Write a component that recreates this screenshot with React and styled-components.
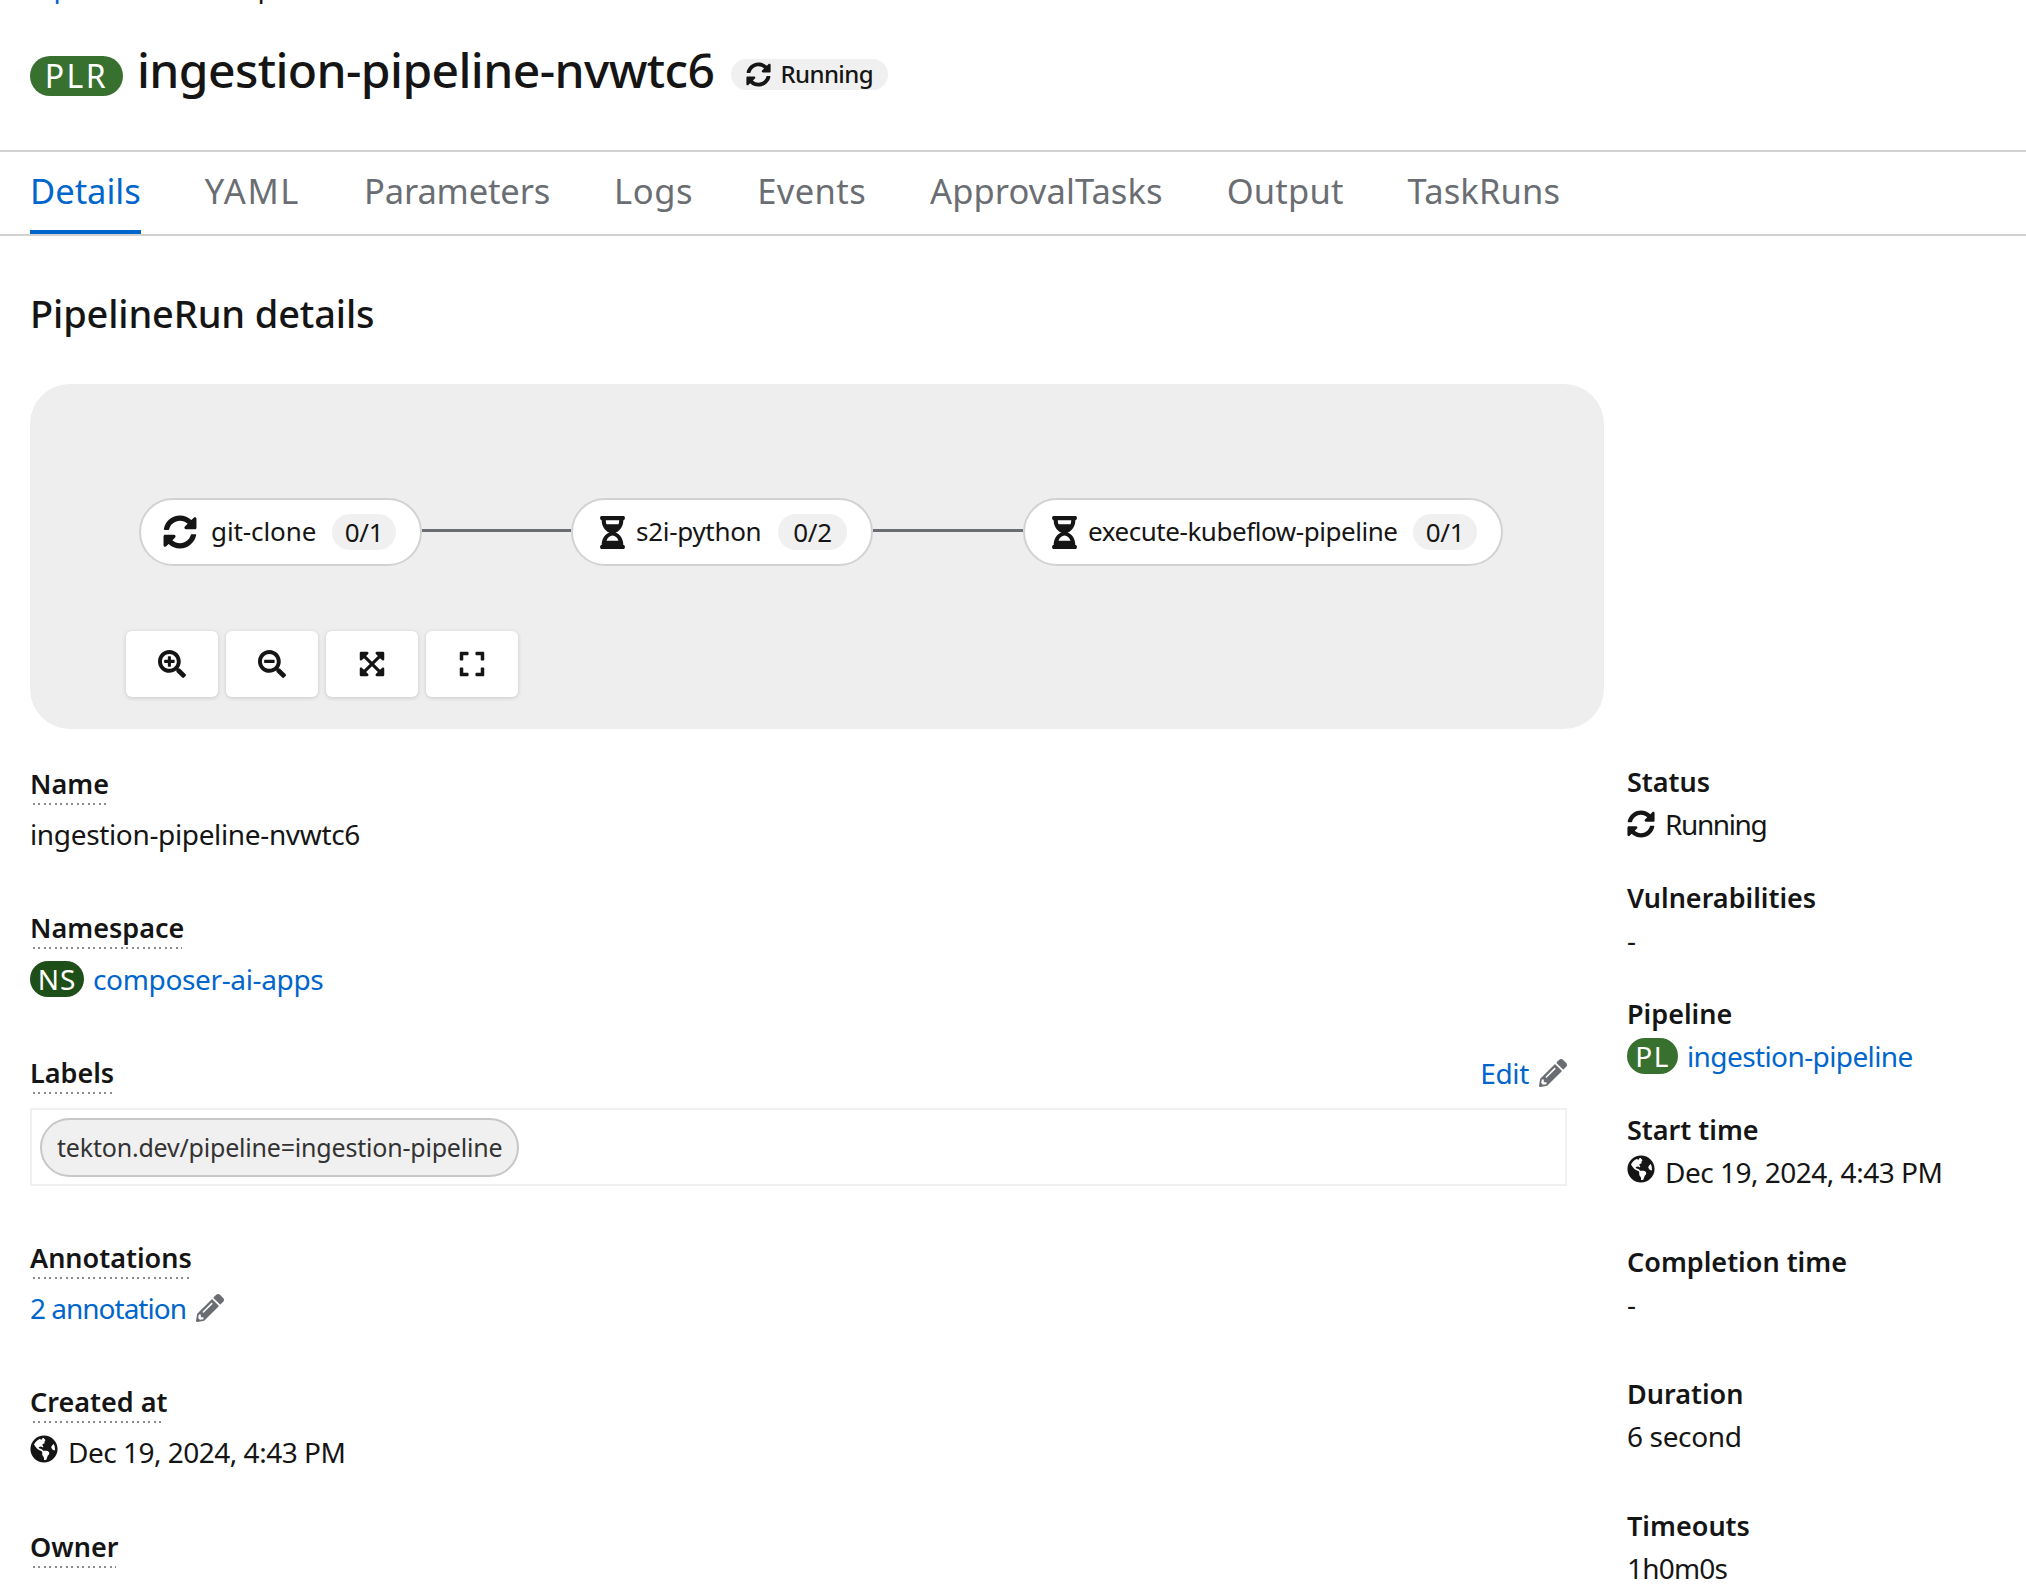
import { Fragment } from "react";
import styled, { createGlobalStyle } from "styled-components";
import {
  FaSyncAlt,
  FaHourglassHalf,
  FaSearchPlus,
  FaSearchMinus,
  FaExpandArrowsAlt,
  FaExpand,
  FaPencilAlt,
  FaGlobeAmericas,
} from "react-icons/fa";

const GlobalStyle = createGlobalStyle`
  html, body { margin: 0; padding: 0; background: #fff; }
  body {
    font-family: "Noto Sans", "Open Sans", sans-serif;
    font-size: 28px;
    line-height: 42px;
    letter-spacing: -0.35px;
    color: #151515;
  }
`;

const Page = styled.div`
  width: 2026px;
  height: 1588px;
  overflow: hidden;
`;

const Breadcrumb = styled.div`
  height: 4px;
  overflow: hidden;
  padding-left: 30px;
  display: flex;
  align-items: flex-end;
  gap: 38px;
  span {
    color: #151515;
    margin-bottom: -4px;
    white-space: nowrap;
  }
  a {
    color: #06c;
    margin-bottom: -4px;
    white-space: nowrap;
  }
`;

const TitleRow = styled.div`
  height: 146px;
  box-sizing: border-box;
  padding: 0 0 2px 30px;
  display: flex;
  align-items: center;
`;

const KindBadge = styled.span`
  display: inline-flex;
  align-items: center;
  justify-content: center;
  flex: none;
  width: ${(p) => p.$w}px;
  height: ${(p) => p.$h}px;
  border-radius: 20px;
  background: ${(p) => p.$bg};
  color: #fff;
  font-size: ${(p) => p.$size}px;
  letter-spacing: ${(p) => p.$ls}px;
  line-height: 1;
`;

const Title = styled.h1`
  margin: 0 17px 0 14px;
  font-size: 48px;
  line-height: 60px;
  font-weight: 500;
  letter-spacing: -0.6px;
  position: relative;
  top: -6px;
`;

const StatusPill = styled.span`
  display: inline-flex;
  align-items: center;
  gap: 9px;
  height: 31px;
  padding: 0 15px;
  border-radius: 16px;
  background: #f0f0f0;
  font-size: 24px;
  font-weight: 500;
  letter-spacing: -0.6px;
  position: relative;
  top: -2px;
  svg { width: 25px; height: 25px; }
`;

const Tabs = styled.div`
  height: 82px;
  padding-left: 30px;
  display: flex;
  gap: 64px;
  border-top: 2px solid #d2d2d2;
  border-bottom: 2px solid #d2d2d2;
`;

const Tab = styled.div`
  display: flex;
  align-items: center;
  font-size: 34.5px;
  letter-spacing: ${(p) => p.$ls || 0}px;
  color: ${(p) => (p.$active ? "#06c" : "#6a6e73")};
  border-bottom: 4px solid ${(p) => (p.$active ? "#06c" : "transparent")};
`;

const Content = styled.div`
  padding: 51px 0 0 30px;
`;

const Heading = styled.h2`
  margin: 0 0 45px;
  font-size: 38px;
  line-height: 52px;
  font-weight: 500;
  letter-spacing: -0.15px;
`;

const GraphPanel = styled.div`
  width: 1574px;
  height: 345px;
  box-sizing: border-box;
  padding: 114px 0 0 96px;
  border-radius: 40px;
  background: #eee;
`;

const NodeRow = styled.div`
  display: flex;
  align-items: center;
  margin-left: 13px;
`;

const Node = styled.div`
  display: flex;
  align-items: center;
  box-sizing: border-box;
  width: ${(p) => p.$w}px;
  height: 68px;
  padding: 0 24px 0 ${(p) => p.$pad}px;
  border: 2px solid #d2d2d2;
  border-radius: 34px;
  background: #fff;
  font-size: 26px;
  svg { flex: none; }
`;

const NodeName = styled.span`
  flex: 1;
  margin: -2px 0 0 ${(p) => p.$gap}px;
  letter-spacing: ${(p) => p.$ls}px;
  white-space: nowrap;
`;

const CountBadge = styled.span`
  display: inline-flex;
  align-items: center;
  justify-content: center;
  flex: none;
  width: ${(p) => p.$w}px;
  height: 36px;
  border-radius: 18px;
  background: #f0f0f0;
`;

const Connector = styled.div`
  width: ${(p) => p.$w}px;
  height: 3px;
  margin-top: -3px;
  background: #6a6e73;
`;

const Controls = styled.div`
  display: flex;
  gap: 8px;
  margin-top: 65px;
`;

const ControlButton = styled.div`
  display: flex;
  align-items: center;
  justify-content: center;
  width: 92px;
  height: 66px;
  border-radius: 6px;
  background: #fff;
  box-shadow: 0 1px 4px rgba(3, 3, 3, 0.16);
  svg { width: 28px; height: 28px; }
`;

const Details = styled.div`
  display: grid;
  grid-template-columns: 1537px 1fr;
  column-gap: 60px;
  margin-top: 34px;
`;

const Column = styled.div`
  margin-top: ${(p) => p.$top || 0}px;
`;

const Block = styled.div`
  margin-bottom: ${(p) => p.$mb}px;
`;

const Term = styled.div`
  display: block;
  width: fit-content;
  position: relative;
  font-weight: 600;
  font-size: 27px;
  letter-spacing: 0;
  ${(p) =>
    p.$dotted &&
    `&::after {
      content: "";
      position: absolute;
      left: 3px;
      right: 2px;
      bottom: 0;
      height: 2px;
      background: repeating-linear-gradient(90deg, #8a8d90 0 2px, transparent 2px 5.5px);
    }`}
`;

const Value = styled.div`
  display: flex;
  align-items: center;
  min-height: 42px;
  margin-top: ${(p) => p.$mt || 0}px;
  letter-spacing: ${(p) => p.$ls ?? -0.35}px;
  white-space: nowrap;
`;

const Link = styled.a`
  color: #06c;
  text-decoration: none;
  margin-left: ${(p) => p.$ml || 0}px;
`;

const LabelHead = styled.div`
  display: flex;
  align-items: flex-start;
  justify-content: space-between;
`;

const EditLink = styled.div`
  display: flex;
  align-items: center;
  gap: 10px;
`;

const Pencil = styled(FaPencilAlt)`
  width: 28px;
  height: 28px;
  color: #6a6e73;
  margin-left: ${(p) => p.$ml || 0}px;
`;

const LabelBox = styled.div`
  height: 78px;
  box-sizing: border-box;
  margin-top: 14px;
  padding: 8px;
  border: 2px solid #f0f0f0;
`;

const LabelChip = styled.span`
  display: inline-flex;
  align-items: center;
  height: 59px;
  box-sizing: border-box;
  padding: 0 15px 2px;
  border: 2px solid #c7c7c7;
  border-radius: 30px;
  background: #f0f0f0;
  font-size: 25px;
  letter-spacing: -0.2px;
  color: #333;
`;

const ValueIcon = styled.span`
  display: inline-flex;
  width: 38px;
  flex: none;
  margin-top: ${(p) => p.$mt || 0}px;
  svg { width: 28px; height: 28px; }
`;

const nodes = [
  { name: "git-clone", count: "0/1", width: 283, pad: 22, gap: 14, ls: -0.1, badge: 64, Icon: FaSyncAlt, size: 34, line: 149 },
  { name: "s2i-python", count: "0/2", width: 302, pad: 23, gap: 7, ls: -0.3, badge: 69, Icon: FaHourglassHalf, size: 33, line: 150 },
  { name: "execute-kubeflow-pipeline", count: "0/1", width: 480, pad: 23, gap: 7, ls: -0.45, badge: 64, Icon: FaHourglassHalf, size: 33 },
];

export default function App() {
  return (
    <Page>
      <GlobalStyle />
      <Breadcrumb>
        <a>PipelineRuns</a>
        <span>PipelineRun details</span>
      </Breadcrumb>
      <TitleRow>
        <KindBadge $w={93} $h={40} $bg="#38702f" $size={32} $ls={2.5}>PLR</KindBadge>
        <Title>ingestion-pipeline-nvwtc6</Title>
        <StatusPill>
          <FaSyncAlt />
          Running
        </StatusPill>
      </TitleRow>
      <Tabs>
        <Tab $active>Details</Tab>
        <Tab $ls={1.6}>YAML</Tab>
        <Tab $ls={-0.15}>Parameters</Tab>
        <Tab $ls={0.6}>Logs</Tab>
        <Tab $ls={0.4}>Events</Tab>
        <Tab $ls={0.1}>ApprovalTasks</Tab>
        <Tab $ls={0.2}>Output</Tab>
        <Tab $ls={0.15}>TaskRuns</Tab>
      </Tabs>
      <Content>
        <Heading>PipelineRun details</Heading>
        <GraphPanel>
          <NodeRow>
            {nodes.map((n) => (
              <Fragment key={n.name}>
                <Node $w={n.width} $pad={n.pad}>
                  <n.Icon size={n.size} />
                  <NodeName $gap={n.gap} $ls={n.ls}>{n.name}</NodeName>
                  <CountBadge $w={n.badge}>{n.count}</CountBadge>
                </Node>
                {n.line && <Connector $w={n.line} />}
              </Fragment>
            ))}
          </NodeRow>
          <Controls>
            <ControlButton><FaSearchPlus /></ControlButton>
            <ControlButton><FaSearchMinus /></ControlButton>
            <ControlButton><FaExpandArrowsAlt /></ControlButton>
            <ControlButton><FaExpand /></ControlButton>
          </Controls>
        </GraphPanel>
        <Details>
          <Column>
            <Block $mb={52}>
              <Term $dotted>Name</Term>
              <Value $mt={8}>ingestion-pipeline-nvwtc6</Value>
            </Block>
            <Block $mb={52}>
              <Term $dotted>Namespace</Term>
              <Value $mt={9}>
                <KindBadge $w={54} $h={36} $bg="#1e4f18" $size={28} $ls={1}>NS</KindBadge>
                <Link $ml={9}>composer-ai-apps</Link>
              </Value>
            </Block>
            <Block $mb={51}>
              <LabelHead>
                <Term $dotted>Labels</Term>
                <EditLink>
                  <Link>Edit</Link>
                  <Pencil />
                </EditLink>
              </LabelHead>
              <LabelBox>
                <LabelChip>tekton.dev/pipeline=ingestion-pipeline</LabelChip>
              </LabelBox>
            </Block>
            <Block $mb={52}>
              <Term $dotted>Annotations</Term>
              <Value $mt={8} $ls={-1}>
                <Link>2 annotation</Link>
                <Pencil $ml={10} />
              </Value>
            </Block>
            <Block $mb={53}>
              <Term $dotted>Created at</Term>
              <Value $mt={8} $ls={-0.5}>
                <ValueIcon $mt={-6}><FaGlobeAmericas /></ValueIcon>
                Dec 19, 2024, 4:43 PM
              </Value>
            </Block>
            <Block $mb={52}>
              <Term $dotted>Owner</Term>
              <Value $mt={8}>No owner</Value>
            </Block>
          </Column>
          <Column $top={-2}>
            <Block $mb={32}>
              <Term>Status</Term>
              <Value $ls={-1.4}><ValueIcon><FaSyncAlt /></ValueIcon>Running</Value>
            </Block>
            <Block $mb={32}>
              <Term>Vulnerabilities</Term>
              <Value>-</Value>
            </Block>
            <Block $mb={32}>
              <Term>Pipeline</Term>
              <Value $ls={-0.6}>
                <KindBadge $w={51} $h={36} $bg="#38702f" $size={28} $ls={1.5}>PL</KindBadge>
                <Link $ml={9}>ingestion-pipeline</Link>
              </Value>
            </Block>
            <Block $mb={48}>
              <Term>Start time</Term>
              <Value $ls={-0.5}>
                <ValueIcon $mt={-6}><FaGlobeAmericas /></ValueIcon>
                Dec 19, 2024, 4:43 PM
              </Value>
            </Block>
            <Block $mb={48}>
              <Term>Completion time</Term>
              <Value>-</Value>
            </Block>
            <Block $mb={48}>
              <Term>Duration</Term>
              <Value>6 second</Value>
            </Block>
            <Block $mb={48}>
              <Term>Timeouts</Term>
              <Value $ls={-0.8}>1h0m0s</Value>
            </Block>
          </Column>
        </Details>
      </Content>
    </Page>
  );
}
